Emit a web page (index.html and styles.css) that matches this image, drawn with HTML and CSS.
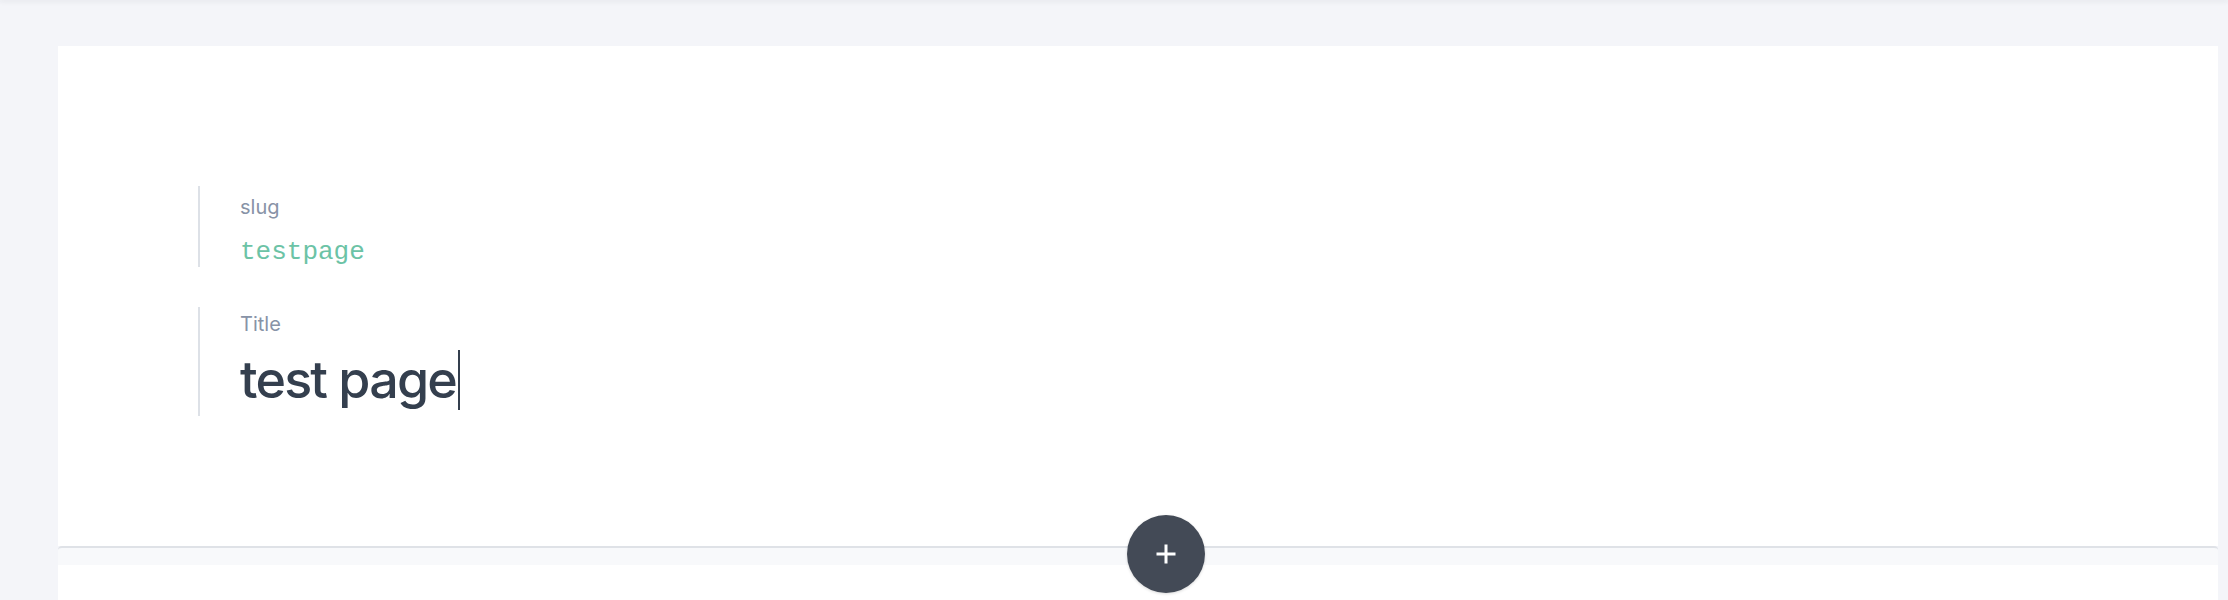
FILE: index.html
```html
<!DOCTYPE html>
<html>
<head>
<meta charset="utf-8">
<link rel="stylesheet" href="styles.css">
</head>
<body>
<div class="topbar"></div>
<main class="main">
  <section class="card">
    <div class="fields">
      <div class="field field-slug">
        <div class="label">slug</div>
        <div class="slug-value">testpage</div>
      </div>
      <div class="field field-title">
        <div class="label label-title">Title</div>
        <div class="title-value">test page<span class="caret"></span></div>
      </div>
    </div>
  </section>
  <div class="divider">
    <button class="add-btn" aria-label="Add">
      <svg width="22" height="22" viewBox="0 0 22 22"><path d="M11 1.5v19M1.5 11h19" stroke="#fff" stroke-width="3" fill="none"/></svg>
    </button>
  </div>
  <section class="card card-next"></section>
</main>
</body>
</html>
```
FILE: styles.css
```css
html, body {
  margin: 0;
  padding: 0;
  height: 100%;
  overflow: hidden;
}
body {
  background: #f4f5f9;
  font-family: Inter, "Noto Sans", sans-serif;
}
.topbar {
  height: 0;
  box-shadow: 0 0 5px 1px rgba(30, 40, 60, 0.12);
  position: relative;
  z-index: 2;
}
.main {
  padding: 46px 10px 0 58px;
  position: relative;
}
.card {
  background: #fff;
  height: 360px;
  padding-top: 140px;
}
.fields {
  display: flex;
  flex-direction: column;
  gap: 40px;
  padding-left: 140px;
}
.field {
  border-left: 2px solid #dde1e7;
  padding-left: 40px;
}
.field-slug {
  height: 81px;
}
.field-title {
  height: 109px;
}
.label {
  font-size: 20px;
  line-height: 24px;
  color: #8893a7;
  padding-top: 9px;
}
.label-title {
  padding-top: 5px;
}
.slug-value {
  font-family: "Liberation Mono", "DejaVu Sans Mono", monospace;
  font-size: 26px;
  line-height: 30px;
  color: #6cc3a6;
  margin-top: 18px;
}
.title-value {
  font-size: 52px;
  font-weight: 500;
  line-height: 60px;
  color: #343f4e;
  margin-top: 14px;
  letter-spacing: -1.8px;
}
.caret {
  display: inline-block;
  width: 2px;
  height: 60px;
  background: #343f4e;
  vertical-align: top;
  margin-left: 2px;
}
.divider {
  position: relative;
  height: 17px;
  background: #f8f9fb;
  border-top: 2px solid #dfe2e7;
  border-radius: 4px 4px 0 0;
}
.add-btn {
  position: absolute;
  left: 1069px;
  top: -33px;
  width: 78px;
  height: 78px;
  border-radius: 50%;
  border: none;
  background: #434a56;
  display: flex;
  align-items: center;
  justify-content: center;
  padding: 0;
  box-shadow: 0 1px 3px rgba(0,0,0,0.15);
}
.card-next {
  height: 200px;
  padding: 0;
}
```
